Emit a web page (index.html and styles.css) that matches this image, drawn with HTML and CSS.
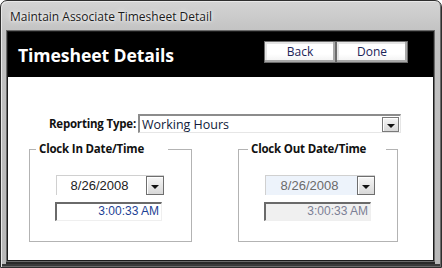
FILE: index.html
```html
<!DOCTYPE html>
<html>
<head>
<meta charset="utf-8">
<link rel="stylesheet" href="styles.css">
</head>
<body>
<div class="window">
  <div class="titlebar">Maintain Associate Timesheet Detail</div>
  <div class="client">
    <div class="header">
      <h1 class="heading">Timesheet Details</h1>
      <div class="actions">
        <button class="btn">Back</button>
        <button class="btn">Done</button>
      </div>
    </div>
    <div class="content">
      <div class="report-row">
        <span class="label">Reporting Type:</span>
        <div class="combo report-combo">
          <span class="combo-text">Working Hours</span>
          <span class="drop"><span class="arrow"></span></span>
        </div>
      </div>
      <div class="groups">
        <fieldset class="group group-in">
          <legend class="legend">Clock In Date/Time</legend>
          <div class="date-combo">
            <span class="date-text">8/26/2008</span>
            <span class="drop"><span class="arrow"></span></span>
          </div>
          <div class="time-box">3:00:33 AM</div>
        </fieldset>
        <fieldset class="group group-out">
          <legend class="legend">Clock Out Date/Time</legend>
          <div class="date-combo disabled">
            <span class="date-text">8/26/2008</span>
            <span class="drop"><span class="arrow"></span></span>
          </div>
          <div class="time-box disabled">3:00:33 AM</div>
        </fieldset>
      </div>
    </div>
  </div>
</div>
</body>
</html>
```
FILE: styles.css
```css
* { box-sizing: border-box; }
html, body { margin: 0; padding: 0; }
body {
  width: 442px;
  height: 268px;
  overflow: hidden;
  background: #fff;
  font-family: "Open Sans", "Noto Sans", sans-serif;
}
.window {
  width: 442px;
  height: 268px;
  border: 1px solid #2e2e2e;
  border-radius: 7px 7px 0 0;
  padding: 0 7px 6px 6px;
  display: flex;
  flex-direction: column;
  background: linear-gradient(180deg, #d4d4d4 0%, #c2c2c2 12%, #b8b8b8 100%);
  box-shadow: inset 1px 1px 0 #e8e8e8, inset -1px -1px 0 #6a6a6a, inset 0 -3px 0 #3a3a3a;
}
.titlebar {
  height: 30px;
  flex: none;
  display: flex;
  align-items: center;
  padding: 1px 0 0 3px;
  font-size: 12px;
  color: #1b1b1b;
  text-shadow: 0 0 6px #ffffff, 0 0 3px #ffffff;
}
.client {
  flex: 1;
  display: flex;
  flex-direction: column;
  background: #ffffff;
  border: 1px solid #1c1c1c;
  box-shadow: 0 0 0 1px #6a6a6a, 0 2px 0 1px #2a2a2a;
}
.header {
  height: 45px;
  flex: none;
  background: #000;
  display: flex;
  align-items: center;
  justify-content: space-between;
  padding: 0 25px 0 10px;
}
.heading {
  margin: 0;
  color: #fff;
  font-size: 17.6px;
  font-weight: 700;
  letter-spacing: -0.1px;
}
.actions {
  display: flex;
  gap: 0;
  margin-top: -6px;
}
.btn {
  width: 72px;
  height: 22px;
  padding: 0;
  font-family: "Open Sans", sans-serif;
  font-size: 12px;
  color: #1c2458;
  background: linear-gradient(180deg, #ffffff 0%, #ffffff 60%, #f0f0f0 100%);
  border: 1px solid #6b6b6b;
  box-shadow: inset -2px -2px 0 #a8a8a8, inset 2px 2px 0 #e4e4e4;
}
.content {
  flex: 1;
  padding: 37px 0 0 0;
  display: flex;
  flex-direction: column;
}
.report-row {
  display: flex;
  align-items: center;
  gap: 2px;
}
.label {
  width: 128px;
  flex: none;
  text-align: right;
  font-size: 11.5px;
  font-weight: 700;
  color: #111;
  white-space: nowrap;
  letter-spacing: -0.2px;
}
.combo {
  display: flex;
  align-items: center;
  justify-content: space-between;
  background: #fff;
  border-style: solid;
  border-width: 2px 1px 1px 2px;
  border-color: #8c8c8c #e6e6e6 #e6e6e6 #8c8c8c;
}
.report-combo {
  width: 263px;
  height: 19px;
  padding: 0 1px 0 2px;
}
.combo-text {
  font-size: 12.5px;
  color: #0f1a3a;
}
.drop {
  width: 17px;
  height: 15px;
  display: flex;
  align-items: center;
  justify-content: center;
  background: linear-gradient(180deg, #f6f6f6, #d8d8d8);
  border: 1px solid #7a7a7a;
  box-shadow: inset 1px 1px 0 #fff;
}
.arrow {
  width: 0;
  height: 0;
  margin-top: 3px;
  border-left: 4px solid transparent;
  border-right: 4px solid transparent;
  border-top: 4px solid #111;
}
.groups {
  display: flex;
  gap: 46px;
  margin: 8px 0 0 21px;
}
.group {
  margin: 0;
  height: 101px;
  padding: 18px 0 0 26px;
  border: 1px solid #b3b3b3;
  min-width: 0;
}
.group-in { width: 163px; }
.group-out { width: 160px; }
.legend {
  margin-left: -20px;
  padding: 0 24px 0 3px;
  font-size: 11.5px;
  font-weight: 700;
  color: #111;
  line-height: 16px;
  white-space: nowrap;
  letter-spacing: -0.2px;
}
.group-out .legend { padding-right: 20px; margin-left: -17px; }
.date-combo {
  width: 108px;
  height: 20px;
  display: flex;
  align-items: center;
  justify-content: space-between;
  border-style: solid;
  border-width: 1px 0 0 1px;
  border-color: #d0d0d0;
  background: #fff;
}
.group-out .date-combo { width: 110px; }
.date-combo .drop {
  width: 18px;
  height: 19px;
  border-color: #6e6e6e;
}
.date-text {
  flex: 1;
  text-align: center;
  padding-right: 4px;
  font-family: "Liberation Sans", Arial, sans-serif;
  font-size: 13px;
  color: #222;
}
.date-combo.disabled { background: #edf3fb; }
.date-combo.disabled .date-text { color: #6a6a6a; }
.time-box {
  width: 107px;
  height: 19px;
  margin: 7px 0 0 -1px;
  border-style: solid;
  border-width: 2px 1px 1px 2px;
  border-color: #6a6a6a #efefef #efefef #6a6a6a;
  text-align: right;
  padding: 0 2px 0 0;
  font-family: "Liberation Sans", Arial, sans-serif;
  font-size: 12px;
  line-height: 15px;
  color: #1d3f94;
  background: #fff;
}
.time-box.disabled {
  width: 107px;
  background: #f0f0f0;
  color: #7c7f95;
}
```
